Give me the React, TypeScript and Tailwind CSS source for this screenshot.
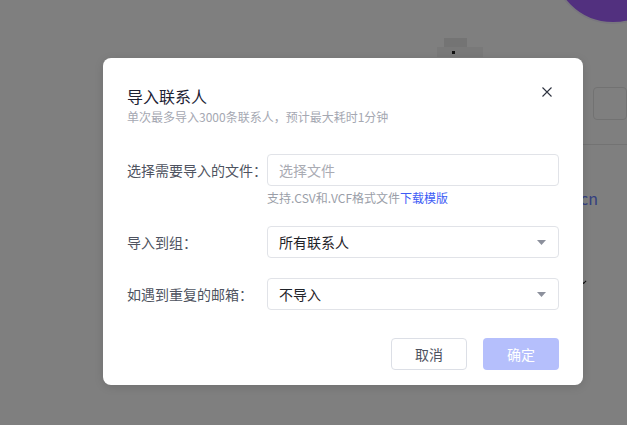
import React from "react";

function Caret() {
  return (
    <svg width="9" height="5" viewBox="0 0 9 5" className="shrink-0">
      <path d="M0 0 L9 0 L4.5 5 Z" fill="#8c909c" />
    </svg>
  );
}

export default function App() {
  const font = { fontFamily: '"Noto Sans CJK SC", "Noto Sans", sans-serif' };
  return (
    <div className="relative h-[425px] w-full overflow-hidden bg-white" style={font}>
      {/* background page */}
      <div className="flex flex-col">
        <div className="flex justify-end">
          <div className="-mt-[100px] -mr-[48px] flex h-[124px] w-[124px] items-center justify-center rounded-full border-[2px] border-[#f2eefc] bg-[#a460fe] p-[1px]" />
        </div>
        <div className="ml-[437px] mt-[14px] flex h-[19px] w-[46px] flex-col">
          <div className="flex h-[9px]">
            <div className="ml-[7px] h-[9px] w-[23px] bg-[#e8e8e8]" />
          </div>
          <div className="flex h-[10px] items-center bg-[#f2f2f2]">
            <div className="ml-[15px] h-[3px] w-[3px] bg-[#222]" />
          </div>
        </div>
        <div className="ml-[540px] mt-[30px] flex gap-[21px]">
          <div className="h-[33px] w-[58px] rounded-[4px] border border-[#e4e4e4]" />
          <div className="h-[33px] w-[60px] rounded-[4px] border border-[#e4e4e4]" />
        </div>
        <div className="ml-[430px] mt-[24px] h-px bg-[#e6e6e6]" />
        <div className="ml-[430px] mt-[42px] flex w-[168px] justify-end text-[16px] leading-[22px] text-[#6a80ff]">
          <span>mail.cn</span>
        </div>
        <div className="ml-[582px] mt-[71px] h-[3px] w-[4px] border-b border-l border-[#222] rotate-[-45deg]" />
      </div>

      {/* overlay */}
      <div className="absolute inset-0 bg-black/50 pl-[103px] pt-[58px]">
        <div className="flex w-[480px] flex-col rounded-[8px] bg-white px-[24px] pb-[15px] pt-[26px] shadow-[0_2px_10px_rgba(0,0,0,0.12)]">
          <div className="flex items-start justify-between">
            <div className="flex flex-col">
              <div className="text-[16px] leading-[24px] text-[#1c2233]">导入联系人</div>
              <div className="text-[12px] leading-[18px] text-[#a5a8b2]">
                单次最多导入3000条联系人，预计最大耗时1分钟
              </div>
            </div>
            <button className="mr-[7px] mt-[3px] flex h-[10px] w-[10px] items-center justify-center">
              <svg width="10" height="10" viewBox="0 0 10 10">
                <path d="M0.5 0.5 L9.5 9.5 M9.5 0.5 L0.5 9.5" stroke="#2e3340" strokeWidth="1.1" />
              </svg>
            </button>
          </div>

          <div className="mt-[28px] grid grid-cols-[140px_1fr] items-center">
            <div className="text-[14px] leading-[20px] text-[#4e5360]">选择需要导入的文件：</div>
            <div className="flex h-[32px] items-center rounded-[4px] border border-[#e1e3e8] px-[11px] text-[14px] text-[#a9abb3]">
              选择文件
            </div>
            <div />
            <div className="mt-[3px] text-[12px] leading-[18px] text-[#9a9ea8]">
              支持.CSV和.VCF格式文件<span className="text-[#3d5cf5]">下载模版</span>
            </div>
          </div>

          <div className="mt-[19px] grid grid-cols-[140px_1fr] items-center">
            <div className="text-[14px] leading-[20px] text-[#4e5360]">导入到组：</div>
            <div className="flex h-[32px] items-center justify-between rounded-[4px] border border-[#e1e3e8] pl-[11px] pr-[12px] text-[14px] text-[#1f2329]">
              <span>所有联系人</span>
              <Caret />
            </div>
          </div>

          <div className="mt-[20px] grid grid-cols-[140px_1fr] items-center">
            <div className="text-[14px] leading-[20px] text-[#4e5360]">如遇到重复的邮箱：</div>
            <div className="flex h-[32px] items-center justify-between rounded-[4px] border border-[#e1e3e8] pl-[11px] pr-[12px] text-[14px] text-[#1f2329]">
              <span>不导入</span>
              <Caret />
            </div>
          </div>

          <div className="mt-[28px] flex justify-end gap-[16px]">
            <button className="flex h-[32px] w-[76px] items-center justify-center rounded-[4px] border border-[#dcdfe6] bg-white text-[14px] text-[#4e5360]">
              取消
            </button>
            <button className="flex h-[32px] w-[76px] items-center justify-center rounded-[4px] bg-[#b5bffc] text-[14px] text-white">
              确定
            </button>
          </div>
        </div>
      </div>
    </div>
  );
}
